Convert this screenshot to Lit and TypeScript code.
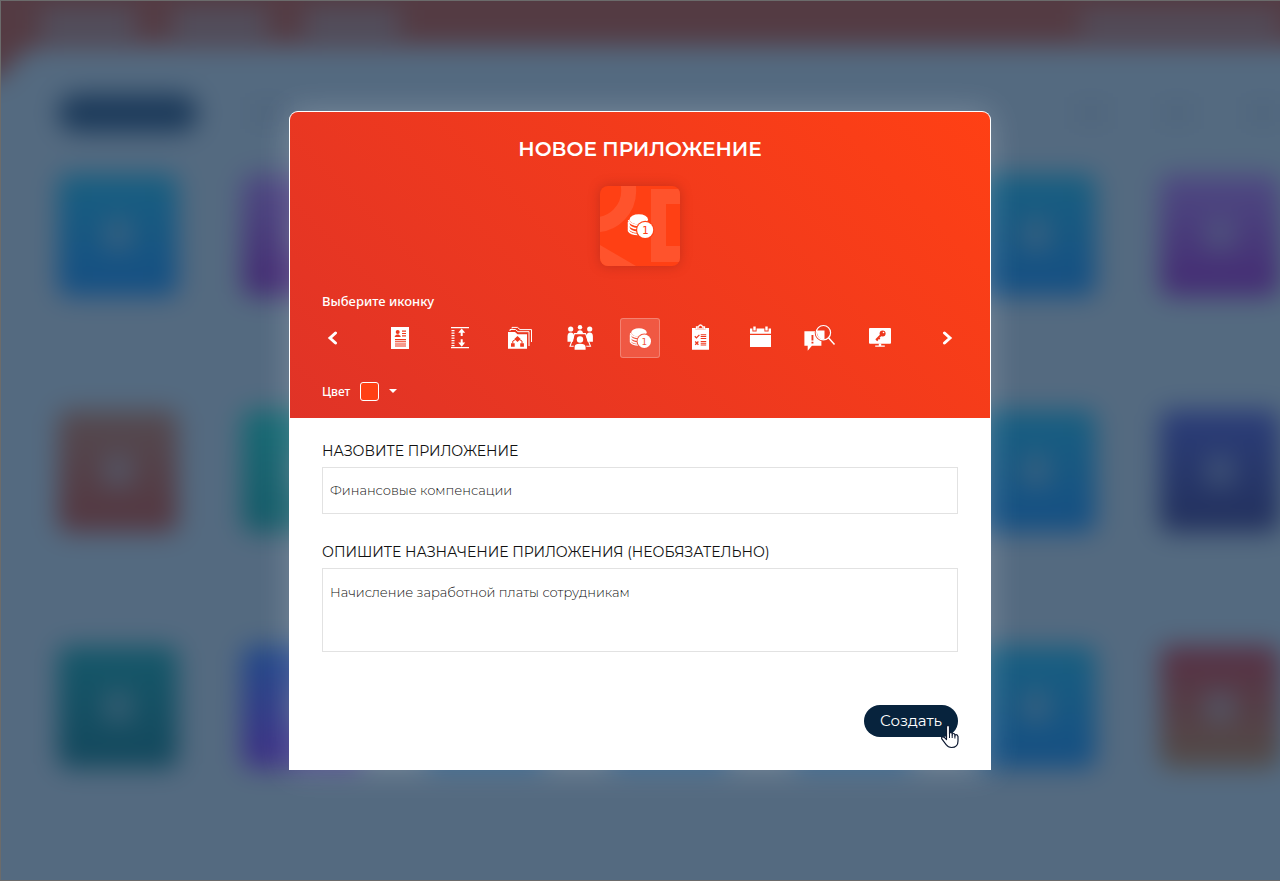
import { LitElement, html, css, svg } from "lit";
import { customElement, state } from "lit/decorators.js";
import { classMap } from "lit/directives/class-map.js";

const coins = svg`
  <path d="M10.500 16.500v7.500c1 2 4 3 8 3" fill="none" stroke="currentColor" stroke-width="1.400"/>
  <path d="M10.500 15c.5 2.500 4 4.300 8 4.500M10.500 18c.5 2.500 4 4 7.500 4.300M10.500 21c.5 2.500 4 4 7.500 4.200" fill="none" stroke="currentColor" stroke-width="1.400"/>
  <ellipse cx="19" cy="14.500" rx="7.700" ry="4.200" fill="currentColor"/>
  <circle cx="24.300" cy="23.300" r="7.700" fill="var(--gap, #ff4014)"/>
  <circle cx="24.300" cy="23.300" r="6.700" fill="currentColor"/>
  <text x="24.300" y="26.500" text-anchor="middle" class="coin-digit">1</text>`;

const icons = [
  {
    name: "Анкета",
    art: svg`<rect x="11" y="9" width="18" height="22" fill="currentColor"/>
      <g class="cut"><circle cx="17.700" cy="14" r="2"/><path d="M14.800 19v-1l2-1.600h1.800l2 1.600v1z"/>
      <path d="M22 12.500h4v1.300h-4zM22 15h4v1h-4zM22 17.300h4v1.200h-4zM15 21h11v1.200H15zM15 23.300h11v1H15zM15 25.400h11v1H15zM15 27.500h11v1H15z"/></g>`,
  },
  {
    name: "Интервал",
    art: svg`<g fill="currentColor"><path d="M11 9h18v1.300H11zM11 29h18v1.300H11zM11.500 12h3v1.200h-3zM11.500 14.500h3v1.200h-3zM11.500 17h3v1.200h-3zM11.500 19.500h3v1.200h-3zM11.500 22h3v1.200h-3zM11.500 24.500h3v1.200h-3zM11.500 27h3v1.200h-3z"/>
      <path d="M21.700 10.500l3.500 4.300h-2.500V18h-2v-3.200h-2.500zM21.700 28.700l3.500-4.300h-2.500v-3.200h-2v3.200h-2.500z"/></g>`,
  },
  {
    name: "Папки",
    art: svg`<path d="M12 10.500V9.400h5.500l2.500 2.200H31.500V24M10 13v-1.500h5.500l2.500 2.200h11V28" fill="none" stroke="currentColor" stroke-width="1"/>
      <path d="M8 14h7l2.500 2.200h9.500v14.500H8z" fill="currentColor"/>
      <g class="cut"><path d="M17.500 18l3.200 3-3.200 3-3.200-3z"/><path d="M11 25.300h3.700v3.500h-3.700zM20.200 25.300h3.700v3.500h-3.700z"/></g>
      <path d="M12.800 25.500v-2.500l3-1.600M22 25.500v-2.500l-3-1.600" fill="none" class="cut-line" stroke-width="1"/>`,
  },
  {
    name: "Команда",
    art: svg`<path d="M14.500 15.600h11l5 12.700H10z" fill="none" stroke="currentColor" stroke-width="1.100"/>
      <g fill="currentColor"><circle cx="10.700" cy="11" r="2.600"/><circle cx="29.700" cy="11" r="2.600"/><circle cx="20" cy="9.200" r="2.200"/>
      <path d="M7.500 23.700v-5.200q0-4 3.200-4t3.400 4l-1.200 5.200zM26.300 18.500q.2-4 3.400-4t3.200 4v5.200h-5.400zM17 15.700q0-3.500 3-3.500t3 3.500z"/></g>
      <circle cx="20" cy="21.500" r="4.300" class="cut"/><path d="M13.500 32v-2.500q0-5 6.500-5t6.500 5V32z" class="cut"/>
      <g fill="currentColor"><circle cx="20" cy="21.500" r="3.200"/><path d="M14.600 31.700V29q0-3.300 5.400-3.300t5.600 3.300v2.700z"/></g>`,
  },
  { name: "Финансы", art: coins },
  {
    name: "Задачи",
    art: svg`<path d="M12 10h3.800v2h9.400v-2H29v21.800H12z" fill="currentColor"/>
      <path d="M16.500 11V9h2q.3-2 2-2t2 2h2v2z" fill="none" stroke="currentColor" stroke-width="1.300"/>
      <g fill="none" class="cut-line" stroke-width="1.300"><path d="M14.800 18.300l1.600 1.600 3-3M15.200 23.500l3.200 3.200M18.400 23.500l-3.200 3.200"/></g>
      <path class="cut" d="M20.700 16.300h5.500v1h-5.500zM20.700 18.100h5.500v1h-5.500zM20.700 19.900h5.500v1h-5.500zM20.700 23h5.500v1h-5.500zM20.700 24.800h5.500v1h-5.500zM20.700 26.600h5.500v1h-5.500z"/>`,
  },
  {
    name: "Календарь",
    art: svg`<path d="M10 10.400h21v5.300H10zM10 17h21v12H10z" fill="currentColor"/>
      <path class="cut" d="M12.400 9h4.200v4.500h-4.200zM24.400 9h4.200v4.500h-4.200z"/>
      <path d="M13.300 8.600h2.400v4h-2.400zM25.300 8.600h2.400v4h-2.400z" fill="currentColor"/>`,
  },
  {
    name: "Поиск обращений",
    art: svg`<path d="M4.400 13.200h17v14.500h-9.500l-4.200 5v-5H4.400z" fill="currentColor"/>
      <path class="cut" d="M11.500 17h1.900v5.400h-1.900zM11.500 23.700h1.900v1.800h-1.900z"/>
      <circle cx="23.400" cy="14.700" r="8.700" class="cut"/>
      <path d="M17 12.500h7.500v9q-5 .5-7-4.500-.8-2-.5-4.500z" fill="currentColor"/>
      <circle cx="23.400" cy="14.700" r="7.200" fill="none" stroke="currentColor" stroke-width="1.200"/>
      <path d="M28.500 19.800l6 6.700" stroke="currentColor" stroke-width="1.500"/>`,
  },
  {
    name: "Доступ",
    art: svg`<rect x="9" y="10" width="22" height="15.700" rx="1" fill="currentColor"/>
      <path d="M18.800 25.500h2.400v2h3.600v1.200h-9.600v-1.200h3.600z" fill="currentColor"/>
      <circle cx="22.600" cy="15.400" r="3" class="cut"/><circle cx="23.500" cy="14.500" r=".8" fill="currentColor"/>
      <path d="M21.500 16.500l-5.500 5.500M18.300 19.700l1.400 1.400M16.500 21.300l1.300 1.300" class="cut-line" stroke-width="1.800" fill="none"/>`,
  },
];

const tiles = [
  "blue", "purple", "blue", "blue", "blue", "blue", "purple",
  "rust", "teal", "blue", "blue", "blue", "blue", "indigo",
  "pine", "violet", "blue", "blue", "blue", "blue", "ember",
];

@customElement("app-backdrop")
export class AppBackdrop extends LitElement {
  static styles = css`
    :host { display: block; position: absolute; inset: -40px; padding: 40px; background: linear-gradient(#543b43 118px, #546a80 118px); filter: blur(13px); }
    .bar { display: flex; align-items: center; gap: 36px; height: 46px; padding: 0 0 0 40px; }
    .word { height: 26px; width: 96px; background: #515160; }
    .word.last { margin-left: auto; width: 200px; height: 20px; }
    .page { height: 100%; margin-right: -40px; padding: 48px 40px 0 58px; border-radius: 50px 0 0 0; background: #546a80; }
    .tabs { display: flex; align-items: center; gap: 52px; height: 38px; margin-bottom: 42px; }
    .pill { width: 140px; height: 38px; border-radius: 19px; background: #1c3a5a; }
    .tab { width: 34px; height: 16px; background: #4d637b; }
    .tab.first { margin-right: auto; }
    .grid { display: grid; grid-template-columns: repeat(7, 120px); justify-content: space-between; row-gap: 114px; width: 1222px; }
    .tile { display: grid; place-items: center; height: 122px; border-radius: 10px; }
    .mark { width: 28px; height: 32px; border-radius: 10px; background: #546a80; opacity: 0.55; }
    .blue { background: linear-gradient(#185f80, #154e83); }
    .purple { background: linear-gradient(#4e4a82, #432a72); }
    .rust { background: linear-gradient(#544a50, #543640); }
    .teal { background: linear-gradient(#176a74, #155a68); }
    .indigo { background: linear-gradient(#2b3d79, #22305c); }
    .pine { background: linear-gradient(#15586a, #13475c); }
    .violet { background: linear-gradient(#214a8a, #3f2f85); }
    .ember { background: linear-gradient(#572f44, #524c48); }
  `;

  render() {
    return html`
      <div class="bar"><div class="word"></div><div class="word"></div><div class="word"></div><div class="word last"></div></div>
      <div class="page">
        <div class="tabs"><div class="pill"></div><div class="tab first"></div><div class="tab"></div><div class="tab"></div><div class="tab"></div></div>
        <div class="grid">
          ${tiles.map((t) => html`<div class=${"tile " + t}><div class="mark"></div></div>`)}
        </div>
      </div>`;
  }
}

@customElement("app-root")
export class AppRoot extends LitElement {
  @state() selected = 4;

  static styles = css`
    :host {
      display: grid; place-items: center; position: relative; box-sizing: border-box;
      min-height: 100vh; overflow: hidden; background: #546a80;
      font-family: Montserrat, Inter, "Noto Sans", sans-serif;
    }
    .frame { position: absolute; inset: 0; border: solid #6b6b6b; border-width: 1px 0 1px 1px; pointer-events: none; }
    * { box-sizing: border-box; }
    button { padding: 0; border: 0; background: none; color: inherit; font: inherit; cursor: pointer; }
    svg { display: block; }
    .dialog {
      position: relative; width: 100%; max-width: 702px; border: 1px solid #fff; border-bottom: 0;
      border-radius: 9px 9px 0 0; background: #fff; box-shadow: 0 0 32px rgba(255, 255, 255, 0.22);
    }
    .head {
      padding: 24px 32px 16px; border-radius: 8px 8px 0 0; color: #fff;
      background: linear-gradient(45deg, #e03327, #ff4014);
      font-family: "Noto Sans", "Open Sans", sans-serif; font-weight: 500;
    }
    .title {
      margin: 0 0 24px; text-align: center; font-family: Montserrat, Inter, sans-serif;
      font-size: 20px; font-weight: 600; line-height: 26px;
    }
    .preview {
      display: grid; width: 80px; height: 80px; margin: 0 auto 24px; border-radius: 8px; overflow: hidden;
      background: #ff4014; box-shadow: 0 0 12px rgba(120, 30, 20, 0.35);
    }
    .preview > * { grid-area: 1 / 1; place-self: center; }
    .caption { font-size: 13px; line-height: 22px; margin: 0 0 6px; }
    .picker { display: flex; justify-content: space-between; align-items: center; margin-bottom: 22px; }
    .icons { display: flex; gap: 20px; }
    .arrow { width: 22px; height: 40px; display: grid; place-items: center; }
    .icon { width: 40px; height: 40px; border-radius: 3px; --gap: #ee391e; }
    .icon.on { background: rgba(255, 255, 255, 0.16); box-shadow: inset 0 0 0 1px rgba(255, 255, 255, 0.25); --gap: #f2553f; }
    .cut { fill: var(--gap); }
    .cut-line { stroke: var(--gap); }
    .coin-digit { font: 9px "DejaVu Sans Mono", monospace; fill: var(--gap, #ff4014); }
    .color { display: flex; align-items: center; gap: 10px; height: 22px; font-size: 12px; }
    .swatch { width: 19px; height: 19px; border: 1px solid #fff; border-radius: 3px; background: #ff4014; }
    .caret { border: 4px solid transparent; border-top-color: #fff; border-bottom: 0; }
    .form { padding: 22px 32px 33px; display: flex; flex-direction: column; color: #111; }
    .label { font-size: 14px; line-height: 22px; margin-bottom: 5px; text-transform: uppercase; }
    .field {
      width: 100%; padding: 13px 7px 15px; border: 1px solid #e2e2e2; border-radius: 0; background: #fff; color: #111;
      font: 300 13px/21px Montserrat, Inter, sans-serif; outline: 0; resize: none; display: block;
    }
    .line { height: 47px; margin-bottom: 27px; }
    .area { height: 84px; margin-bottom: 53px; }
    .submit {
      position: relative; align-self: flex-end; height: 32px; padding: 0 16px; border-radius: 16px;
      background: #07233d; color: #fff; font-size: 15px; line-height: 32px;
    }
    .hand { position: absolute; right: -2px; bottom: -12px; }
  `;

  render() {
    return html`
      <app-backdrop aria-hidden="true"></app-backdrop>
      <div class="frame"></div>
      <section class="dialog" role="dialog" aria-labelledby="title">
        <header class="head">
          <h1 class="title" id="title">НОВОЕ ПРИЛОЖЕНИЕ</h1>
          <div class="preview">
            <svg width="80" height="80" viewBox="0 0 80 80" aria-hidden="true">
              <circle cx="-5" cy="5" r="33.700" fill="none" stroke="#ff532c" stroke-width="15"/>
              <path d="M0 59l36 21H0zM51 3h29v15H66v42h14v16H51z" fill="#ff532c"/>
            </svg>
            <svg width="48" height="48" viewBox="0 0 40 40" aria-hidden="true">${coins}</svg>
          </div>
          <p class="caption">Выберите иконку</p>
          <div class="picker">
            <button class="arrow" aria-label="Назад">
              <svg width="12" height="14" viewBox="0 0 12 14"><path d="M8.500 2L3 7l5.500 5" fill="none" stroke="currentColor" stroke-width="3" stroke-linecap="round"/></svg>
            </button>
            <div class="icons">
              ${icons.map((icon, i) => html`
                <button class=${classMap({ icon: true, on: i === this.selected })} aria-label=${icon.name}
                  aria-pressed=${i === this.selected} @click=${() => (this.selected = i)}>
                  <svg width="40" height="40" viewBox="0 0 40 40">${icon.art}</svg>
                </button>`)}
            </div>
            <button class="arrow" aria-label="Вперёд">
              <svg width="12" height="14" viewBox="0 0 12 14"><path d="M3.500 2L9 7l-5.500 5" fill="none" stroke="currentColor" stroke-width="3" stroke-linecap="round"/></svg>
            </button>
          </div>
          <button class="color"><span>Цвет</span><span class="swatch"></span><span class="caret"></span></button>
        </header>
        <form class="form" @submit=${(e: Event) => e.preventDefault()}>
          <label class="label" for="name">Назовите приложение</label>
          <input class="field line" id="name" value="Финансовые компенсации">
          <label class="label" for="about">Опишите назначение приложения (необязательно)</label>
          <textarea class="field area" id="about" .value=${"Начисление заработной платы сотрудникам"}></textarea>
          <button class="submit">Создать
            <svg class="hand" width="20" height="25" viewBox="0 0 20 25" aria-hidden="true">
              <path d="M6.500 15.500V3.200Q6.500 1.500 8 1.500t1.500 1.700V10q0-1.500 1.300-1.500T12.200 10v1q0-1.500 1.300-1.500t1.400 1.500v1q0-1.300 1.200-1.300t1.900 1.800V17q0 6.500-6.500 6.500-3.500 0-5.200-2.700L2 15.200q-1-1.700.3-2.200 1.200-.400 2.500.8z" fill="#fff" stroke="#0b1730" stroke-width="1.200" stroke-linejoin="round"/>
              <path d="M9.500 10v4M12.200 11v3M14.900 12v2.500" stroke="#0b1730" stroke-width="1"/>
            </svg>
          </button>
        </form>
      </section>`;
  }
}
